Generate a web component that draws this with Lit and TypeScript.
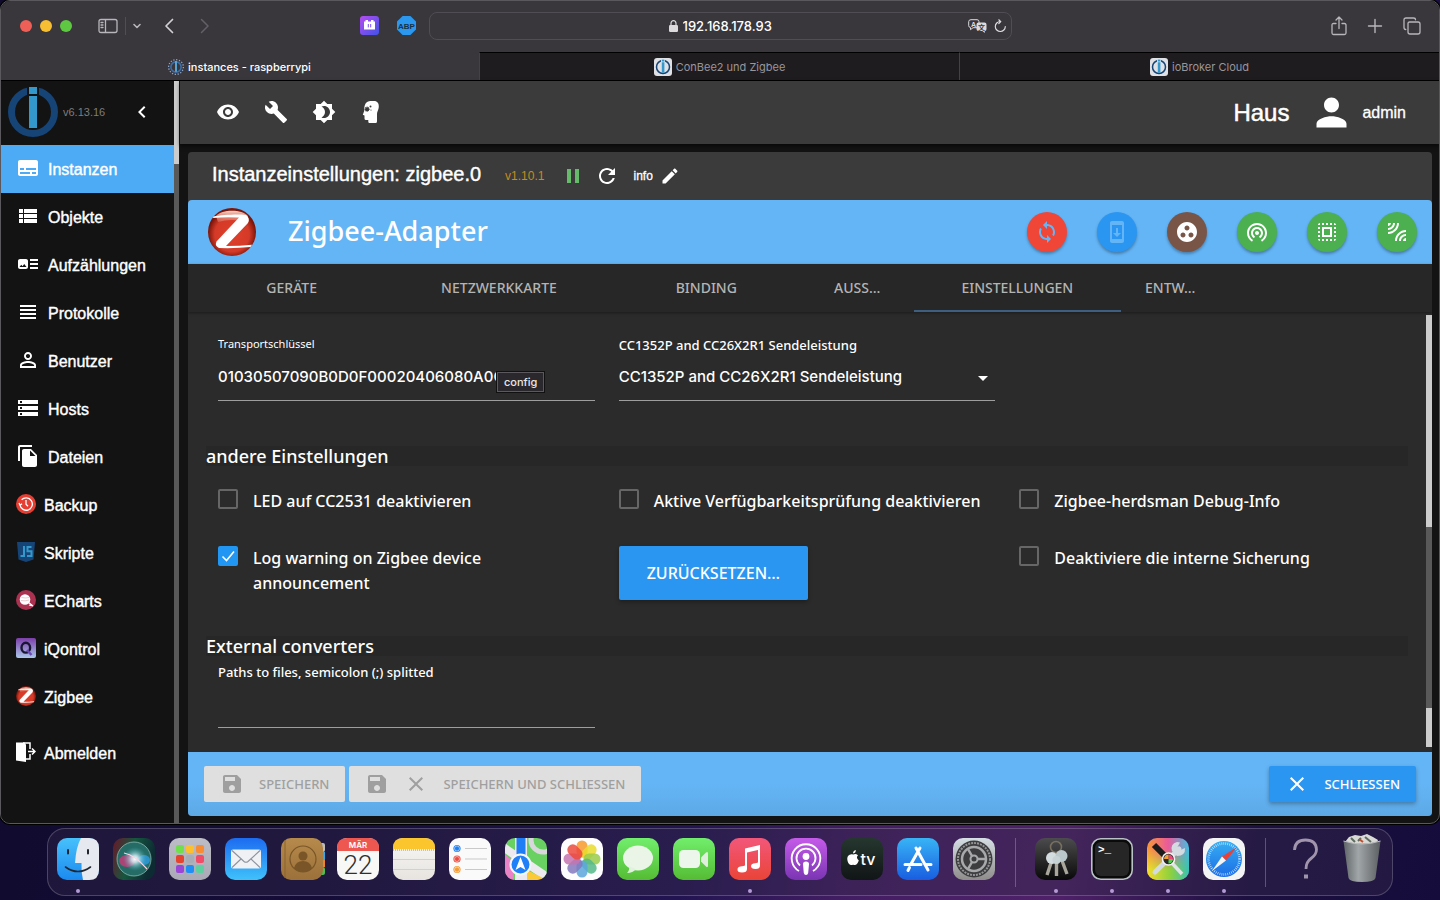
import { LitElement, html, css, svg, TemplateResult } from "lit";
import { customElement } from "lit/decorators.js";
import { classMap } from "lit/directives/class-map.js";

const PATHS: Record<string, string> = {
  eye: "M12 4.5C7 4.5 2.73 7.61 1 12c1.73 4.39 6 7.5 11 7.5s9.27-3.11 11-7.5c-1.73-4.39-6-7.5-11-7.5zM12 17c-2.76 0-5-2.24-5-5s2.24-5 5-5 5 2.24 5 5-2.24 5-5 5zm0-8c-1.66 0-3 1.34-3 3s1.34 3 3 3 3-1.34 3-3-1.34-3-3-3z",
  build: "M22.7 19l-9.1-9.1c.9-2.3.4-5-1.5-6.9-2-2-5-2.4-7.4-1.3L9 6 6 9 1.6 4.7C.4 7.1.9 10.1 2.9 12.1c1.9 1.9 4.6 2.4 6.9 1.5l9.1 9.1c.4.4 1 .4 1.4 0l2.3-2.3c.5-.4.5-1.1.1-1.4z",
  theme: "M20 8.69V4h-4.69L12 .69 8.69 4H4v4.69L.69 12 4 15.31V20h4.69L12 23.31 15.31 20H20v-4.69L23.31 12 20 8.69zM12 18c-.89 0-1.74-.2-2.5-.55C11.56 16.5 13 14.42 13 12s-1.44-4.5-3.5-5.45C10.26 6.2 11.11 6 12 6c3.31 0 6 2.69 6 6s-2.69 6-6 6z",
  subtitles: "M20 4H4c-1.1 0-2 .9-2 2v12c0 1.1.9 2 2 2h16c1.1 0 2-.9 2-2V6c0-1.1-.9-2-2-2zM4 12h4v2H4v-2zm10 6H4v-2h10v2zm6 0h-4v-2h4v2zm0-4H10v-2h10v2z",
  list: "M3 14h4v-4H3v4zm0 5h4v-4H3v4zM3 9h4V5H3v4zm5 5h13v-4H8v4zm0 5h13v-4H8v4zM8 5v4h13V5H8z",
  art: "M22 13h-8v-2h8v2zm0-6h-8v2h8V7zm-8 10h8v-2h-8v2zm-2-8v6c0 1.1-.9 2-2 2H4c-1.1 0-2-.9-2-2V9c0-1.1.9-2 2-2h6c1.1 0 2 .9 2 2zm-1.5 6l-2.25-3-1.75 2.26-1.25-1.51L3.5 15h7z",
  headline: "M4 15h16v-2H4v2zm0 4h16v-2H4v2zm0-8h16V9H4v2zm0-6v2h16V5H4z",
  personOutline: "M12 5.9c1.16 0 2.1.94 2.1 2.1s-.94 2.1-2.1 2.1S9.9 9.16 9.9 8s.94-2.1 2.1-2.1m0 9c2.97 0 6.1 1.46 6.1 2.1v1.1H5.9V17c0-.64 3.13-2.1 6.1-2.1M12 4C9.79 4 8 5.79 8 8s1.79 4 4 4 4-1.79 4-4-1.79-4-4-4zm0 9c-2.67 0-8 1.34-8 4v3h16v-3c0-2.66-5.33-4-8-4z",
  storage: "M2 20h20v-4H2v4zm2-3h2v2H4v-2zM2 4v4h20V4H2zm4 3H4V5h2v2zm-4 7h20v-4H2v4zm2-3h2v2H4v-2z",
  files: "M16 1H4c-1.1 0-2 .9-2 2v14h2V3h12V1zm-1 4l6 6v10c0 1.1-.9 2-2 2H7.99C6.89 23 6 22.1 6 21V7c0-1.1.89-2 1.99-2h7zm-1 7h5.5L14 6.5V12z",
  refresh: "M17.65 6.35C16.2 4.9 14.21 4 12 4c-4.42 0-7.99 3.58-7.99 8s3.57 8 7.99 8c3.73 0 6.84-2.55 7.73-6h-2.08c-.82 2.33-3.04 4-5.65 4-3.31 0-6-2.69-6-6s2.69-6 6-6c1.66 0 3.14.69 4.22 1.78L13 11h7V4l-2.35 2.35z",
  edit: "M3 17.25V21h3.75L17.81 9.94l-3.75-3.75L3 17.25zM20.71 7.04c.39-.39.39-1.02 0-1.41l-2.34-2.34c-.39-.39-1.02-.39-1.41 0l-1.83 1.83 3.75 3.75 1.83-1.83z",
  pause: "M6 19h4V5H6v14zm8-14v14h4V5h-4z",
  sync: "M12 4V1L8 5l4 4V6c3.31 0 6 2.69 6 6 0 1.01-.25 1.97-.7 2.8l1.46 1.46C19.54 15.03 20 13.57 20 12c0-4.42-3.58-8-8-8zm0 14c-3.31 0-6-2.69-6-6 0-1.01.25-1.97.7-2.8L5.24 7.74C4.46 8.97 4 10.43 4 12c0 4.42 3.58 8 8 8v3l4-4-4-4v3z",
  update: "M17 1.01L7 1c-1.1 0-2 .9-2 2v18c0 1.1.9 2 2 2h10c1.1 0 2-.9 2-2V3c0-1.1-.9-1.99-2-1.99zM17 19H7V5h10v14zm-1-6h-3V8h-2v5H8l4 4 4-4z",
  group: "M12 2C6.48 2 2 6.48 2 12s4.48 10 10 10 10-4.48 10-10S17.52 2 12 2zM8 17.5c-1.38 0-2.5-1.12-2.5-2.5s1.12-2.5 2.5-2.5 2.5 1.12 2.5 2.5-1.12 2.5-2.5 2.5zM9.5 8c0-1.38 1.12-2.5 2.5-2.5s2.5 1.12 2.5 2.5-1.12 2.5-2.5 2.5S9.5 9.38 9.5 8zm6.5 9.5c-1.38 0-2.5-1.12-2.5-2.5s1.12-2.5 2.5-2.5 2.5 1.12 2.5 2.5-1.12 2.5-2.5 2.5z",
  tether: "M12 11c-1.1 0-2 .9-2 2s.9 2 2 2 2-.9 2-2-.9-2-2-2zm6 2c0-3.31-2.69-6-6-6s-6 2.69-6 6c0 2.22 1.21 4.15 3 5.19l1-1.74c-1.19-.7-2-1.97-2-3.45 0-2.21 1.79-4 4-4s4 1.79 4 4c0 1.48-.81 2.75-2 3.45l1 1.74c1.79-1.04 3-2.97 3-5.19zM12 3C6.48 3 2 7.48 2 13c0 3.7 2.01 6.92 4.99 8.65l1-1.73C5.61 18.53 4 15.96 4 13c0-4.42 3.58-8 8-8s8 3.58 8 8c0 2.96-1.61 5.53-4 6.92l1 1.73c2.99-1.73 5-4.95 5-8.65 0-5.52-4.48-10-10-10z",
  selectAll: "M3 5h2V3c-1.1 0-2 .9-2 2zm0 8h2v-2H3v2zm4 8h2v-2H7v2zM3 9h2V7H3v2zm10-6h-2v2h2V3zm6 0v2h2c0-1.1-.9-2-2-2zM5 21v-2H3c0 1.1.9 2 2 2zm-2-4h2v-2H3v2zM9 3H7v2h2V3zm2 18h2v-2h-2v2zm8-8h2v-2h-2v2zm0 8c1.1 0 2-.9 2-2h-2v2zm0-12h2V7h-2v2zm0 8h2v-2h-2v2zm-4 4h2v-2h-2v2zm0-16h2V3h-2v2zM7 17h10V7H7v10zm2-8h6v6H9V9z",
  leak: "M6 3H3v3c1.66 0 3-1.34 3-3zm8 0h-2c0 4.97-4.03 9-9 9v2c6.08 0 11-4.93 11-11zm-4 0H8c0 2.76-2.24 5-5 5v2c3.87 0 7-3.13 7-7zm0 18h2c0-4.97 4.03-9 9-9v-2c-6.07 0-11 4.93-11 11zm8 0h3v-3c-1.66 0-3 1.34-3 3zm-4 0h2c0-2.76 2.24-5 5-5v-2c-3.87 0-7 3.13-7 7z",
  save: "M17 3H5c-1.11 0-2 .9-2 2v14c0 1.1.89 2 2 2h14c1.1 0 2-.9 2-2V7l-4-4zm-5 16c-1.66 0-3-1.34-3-3s1.34-3 3-3 3 1.34 3 3-1.34 3-3 3zm3-10H5V5h10v4z",
  close: "M19 6.41L17.59 5 12 10.59 6.41 5 5 6.41 10.59 12 5 17.59 6.41 19 12 13.41 17.59 19 19 17.59 13.41 12z",
  person: "M12 12c2.21 0 4-1.79 4-4s-1.79-4-4-4-4 1.79-4 4 1.79 4 4 4zm0 2c-2.67 0-8 1.34-8 4v2h16v-2c0-2.66-5.33-4-8-4z",
  chevron: "M15.41 7.41L14 6l-6 6 6 6 1.41-1.41L10.83 12z",
  drop: "M7 10l5 5 5-5z",
};

const icon = (name: string, size = 24) =>
  html`<svg width=${size} height=${size} viewBox="0 0 24 24" fill="currentColor" aria-hidden="true"><path d=${PATHS[name]}></path></svg>`;

const stroked = (w: number, h: number, d: string, width = 1.4) =>
  html`<svg width=${w} height=${h} viewBox="0 0 ${w} ${h}" fill="none" stroke="currentColor" stroke-width=${width} stroke-linecap="round" stroke-linejoin="round" aria-hidden="true"><path d=${d}></path></svg>`;

const head = html`<svg width="24" height="24" viewBox="1.500 0 24 24" aria-hidden="true">
  <path fill="#fff" d="M12 1h3.500C19 1 20.500 3.500 20.300 7c-.2 3-1.800 4.500-1.800 7v7.500q0 1.500-1.500 1.500h-6q-1.200 0-1.200-1.300V20H7.500Q6 20 6 18.500V15.500L4.300 14.700l1.500-4C5.500 4.500 7.500 1 12 1z"/>
  <circle cx="8.600" cy="9.200" r="2" fill="#3b3b3b"/><circle cx="12" cy="6.500" r="1" fill="#3b3b3b"/><circle cx="12.500" cy="10" r=".6" fill="#3b3b3b"/>
  <path d="M8.600 6.500v5.400M5.900 9.200h5.400M6.700 7.300l3.800 3.800M10.500 7.300l-3.800 3.800" stroke="#3b3b3b" stroke-width=".9"/>
</svg>`;

const brokerLogo = (size: number, ticks = false) => html`<svg width=${size} height=${size} viewBox="0 0 50 50" aria-hidden="true">
  ${ticks ? svg`<circle cx="25" cy="25" r="23" fill="none" stroke="#8fa6c4" stroke-width="4" stroke-dasharray="4 5"/>` : ""}
  <circle cx="25" cy="25" r=${ticks ? 16 : 21.5} fill="none" stroke=${ticks ? "#3c6ea8" : "#164477"} stroke-width=${ticks ? 5 : 7}/>
  ${ticks ? svg`<path fill="#5aa9d8" d="M22 6h6v34h-6z"/>` : svg`<path fill="#131313" d="M19 0h12v10H19z"/><path fill="#3399cc" d="M21 0h8v7h-8zM21 9h8v32h-8z"/>`}
</svg>`;

const brokerBadge = html`<svg width="18" height="18" viewBox="0 0 18 18" aria-hidden="true">
  <rect width="18" height="18" rx="3" fill="#dfe1e4"/>
  <circle cx="9" cy="9" r="6.500" fill="none" stroke="#164477" stroke-width="1.500"/>
  <path fill="#dfe1e4" d="M7 1.500h4v3H7z"/><path fill="#3399cc" d="M7.800 1.800h2.600v1.700H7.800zM7.800 4.200h2.600v10.500H7.800z"/>
</svg>`;

const zigbeeLogo = (size: number, id: string) => html`<svg width=${size} height=${size} viewBox="0 0 48 48" aria-hidden="true">
  <defs>
    <radialGradient id="${id}r" cx=".5" cy=".55" r=".5"><stop offset="0" stop-color="#e0402b"/><stop offset=".72" stop-color="#d43a28"/><stop offset="1" stop-color="#7c1509"/></radialGradient>
    <linearGradient id="${id}g" x1="0" y1="0" x2="0" y2="1"><stop offset="0" stop-color="#f9d2c6"/><stop offset="1" stop-color="#e4806c" stop-opacity=".5"/></linearGradient>
  </defs>
  <circle cx="24" cy="24" r="24" fill="url(#${id}r)"/>
  <path fill="url(#${id}g)" d="M8 8C14 1 34 1 40 8L38 14Q24 10 10 14z"/>
  <path fill="#fff" d="M5.500 8.500C14 6.800 30 6 38 7Q42.500 10.500 40 15L18 38Q32 38 44 36.700L42.500 39Q28 40.500 11 40Q6.500 38 8.500 33.500L31 9.500Q17 8.600 5 10z"/>
</svg>`;

const backupIcon = html`<svg width="20" height="20" viewBox="0 0 20 20" aria-hidden="true"><circle cx="10" cy="10" r="10" fill="#e53e33"/><path d="M4 11a6.200 6.200 0 1 0 1.600-5.200M3 9l1 2.300 2-1.500M10 6v4.200l2 2" fill="none" stroke="#fff" stroke-width="1.300"/></svg>`;
const scriptIcon = html`<svg width="20" height="20" viewBox="0 0 20 20" aria-hidden="true"><path fill="#164477" d="M1 0h18l-1.500 17.500L10 20l-7.500-2.500z"/><path d="M8 4v10H4.500M15.500 5H11.500v4.300h4V14h-4.500" fill="none" stroke="#3399cc" stroke-width="2"/></svg>`;
const chartIcon = html`<svg width="20" height="20" viewBox="0 0 20 20" aria-hidden="true"><circle cx="10" cy="10" r="10" fill="#aa3150"/><circle cx="9" cy="9.500" r="5.300" fill="#fff"/><path d="M12 12l5 4-4-1M5 7c3-1 5 0 8 1M4.500 10c3 1 6 1 9 0" stroke="#fff" fill="none" stroke-width="1.200"/><path d="M5.500 7.500q4 1 8 0M5 10.500q4 1 8-.5" stroke="#dba6b4" fill="none" stroke-width=".6"/></svg>`;
const qIcon = html`<svg width="20" height="20" viewBox="0 0 20 20" aria-hidden="true"><defs><linearGradient id="qg" x1="0" y1="0" x2="0" y2="1"><stop offset="0" stop-color="#7b3fa8"/><stop offset="1" stop-color="#abc6ea"/></linearGradient></defs><rect width="20" height="20" rx="2" fill="url(#qg)"/><ellipse cx="9.800" cy="9.700" rx="4.300" ry="4.900" fill="none" stroke="#181632" stroke-width="2.400"/><path d="M11 12l4.500 5" stroke="#6d49b4" stroke-width="2.400"/></svg>`;
const exitIcon = html`<svg width="20" height="20" viewBox="0 0 20 20" aria-hidden="true"><path fill="#fff" d="M0 .5h8.500l1.500 2V20L0 18.500z"/><path d="M7 1h7v6M14 12v5h-4M12 9.500h7M16 6.500l3 3-3 3" fill="none" stroke="#fff" stroke-width="1.500"/></svg>`;

type NavItem = { label: string; icon: TemplateResult; active?: boolean; apart?: boolean };

const NAV: NavItem[] = [
  { label: "Instanzen", icon: icon("subtitles"), active: true },
  { label: "Objekte", icon: icon("list") },
  { label: "Aufzählungen", icon: icon("art") },
  { label: "Protokolle", icon: icon("headline") },
  { label: "Benutzer", icon: icon("personOutline") },
  { label: "Hosts", icon: icon("storage") },
  { label: "Dateien", icon: icon("files") },
  { label: "Backup", icon: backupIcon },
  { label: "Skripte", icon: scriptIcon },
  { label: "ECharts", icon: chartIcon },
  { label: "iQontrol", icon: qIcon },
  { label: "Zigbee", icon: zigbeeLogo(20, "zn") },
  { label: "Abmelden", icon: exitIcon, apart: true },
];

@customElement("safari-toolbar")
export class SafariToolbar extends LitElement {
  static styles = css`
    :host { display: block; font-family: Inter, "Liberation Sans", sans-serif; color: #b8b6ba; }
    * { box-sizing: border-box; }
    svg { display: block; }
    button { all: unset; display: flex; }
    .bar { display: grid; grid-template-columns: 1fr 583px 1fr; align-items: center; height: 51px; padding-bottom: 2px; background: #39363c; }
    .left { display: flex; align-items: center; padding: 0 13px 0 19px; }
    .lights { display: flex; gap: 8px; margin-right: 26px; }
    .light { width: 12px; height: 12px; border-radius: 50%; background: #ed5f57; }
    .light.yellow { background: #f6be32; }
    .light.green { background: #5fc842; }
    .rule { width: 1px; height: 18px; margin: 0 7px; background: #504d54; }
    .back { margin-left: 23px; color: #d2d0d4; }
    .forward { margin-left: 26px; color: #636067; }
    .extensions { display: flex; gap: 18px; margin-left: auto; }
    .abp { font: 700 8px "Liberation Sans", sans-serif; fill: #17324b; }
    .address { display: flex; align-items: center; height: 28px; padding: 0 4px 0 46px; border: 1px solid #504d54; border-radius: 8px; color: #dcdadd; }
    .where { display: flex; align-items: center; justify-content: center; gap: 5px; flex: 1; }
    .where input { all: unset; width: 92px; font-size: 13px; font-weight: 500; line-height: 18px; color: #fff; }
    .glyph { font: 700 7px "Liberation Sans", "Noto Sans CJK SC", sans-serif; }
    .tools { display: flex; gap: 7px; align-items: center; }
    .right { display: flex; align-items: center; justify-content: flex-end; gap: 20px; padding-right: 18px; }
    .tabs { display: grid; grid-template-columns: repeat(3, 1fr); height: 29px; margin-left: -2px; border-bottom: 1px solid #000; background: #1f1c20; }
    .tab { display: flex; align-items: center; justify-content: center; gap: 4px; border-top: 1px solid #000; border-left: 1px solid #444147; font-size: 11px; line-height: 16px; color: #98969a; text-decoration: none; }
    .tab.active { border-color: #39363c; background: #39363c; color: #fff; font-weight: 500; }
  `;

  render() {
    return html`
      <div class="bar">
        <div class="left">
          <div class="lights"><span class="light"></span><span class="light yellow"></span><span class="light green"></span></div>
          <button aria-label="Seitenleiste">${stroked(20, 16, "M3 1.500h14q2 0 2 2v9q0 2-2 2H3q-2 0-2-2v-9q0-2 2-2zM7.500 2v12M3 4.500h2M3 7h2M3 9.500h2", 1.3)}</button>
          <span class="rule"></span>
          <button aria-label="Tabgruppen">${stroked(8, 6, "M1 1.500l3 3 3-3", 1.6)}</button>
          <button class="back" aria-label="Zurück">${stroked(10, 16, "M8.500 1.500L2 8l6.500 6.500", 1.7)}</button>
          <button class="forward" aria-label="Vorwärts">${stroked(10, 16, "M1.500 1.500L8 8l-6.500 6.500", 1.5)}</button>
          <div class="extensions">
            <svg width="19" height="19" viewBox="0 0 19 19"><defs><linearGradient id="ext" x1="0" y1="0" x2="1" y2="1"><stop offset="0" stop-color="#b64df0"/><stop offset="1" stop-color="#3f52e8"/></linearGradient></defs><rect width="19" height="19" rx="3" fill="url(#ext)"/><path fill="#fff" d="M5.500 4h2.500v1.500h3V4h2.500v1.500h1.500v8H4v-8h1.500z"/><path d="M8.300 8v3.400M10.700 8v3.400" stroke="#7a50ea"/></svg>
            <svg width="19" height="19" viewBox="0 0 19 19"><path fill="#2b97ef" d="M5.600 0h7.800L19 5.600v7.800L13.400 19H5.600L0 13.400V5.600z"/><text class="abp" x="9.500" y="12.500" text-anchor="middle">ABP</text></svg>
          </div>
        </div>
        <div class="address">
          <label class="where">
            <svg width="9" height="12" viewBox="0 0 9 12" aria-hidden="true"><rect y="5" width="9" height="7" rx="1.200" fill="#dcdadd"/><path d="M2 5.500V3.200a2.500 2.500 0 0 1 5 0v2.300" fill="none" stroke="#dcdadd" stroke-width="1.200"/></svg>
            <input aria-label="Adresse" value="192.168.178.93" />
          </label>
          <div class="tools">
            <svg width="19" height="14" viewBox="0 0 19 14"><path d="M3 .7h6q2 0 2 2v4q0 2-2 2H5l-2.500 2V8.600Q.7 8.300.7 6.700v-4q0-2 2.300-2z" fill="none" stroke="#dcdadd"/><path fill="#dcdadd" d="M10.500 3.500h6q2 0 2 2v4.500q0 2-1.700 2v1.900l-2.500-1.900h-3.800q-2 0-2-2V5.500q0-2 2-2z"/><text class="glyph" x="3" y="7.500" fill="#dcdadd">A</text><text class="glyph" x="10" y="10.500" fill="#39363c">文</text></svg>
            <button aria-label="Neu laden">${stroked(13, 14, "M11.300 7.500a5 5 0 1 1-5-5M4.800 .8l2 1.800-2 2", 1.2)}</button>
          </div>
        </div>
        <div class="right">
          <button aria-label="Teilen">${stroked(16, 20, "M5 7.500H2.500q-1.500 0-1.500 1.500v8q0 1.500 1.500 1.500h11q1.500 0 1.500-1.500V9q0-1.500-1.500-1.500H11M8 12.500V1.200M5 4l3-3 3 3", 1.3)}</button>
          <button aria-label="Neuer Tab">${stroked(16, 16, "M8 1.500v13M1.500 8h13", 1.4)}</button>
          <button aria-label="Tabübersicht">${stroked(18, 18, "M6.500 5H15q2 0 2 2v8q0 2-2 2H7q-2 0-2-2V6.500q0-1.500 1.500-1.500zM2.800 12.500Q1 12.500 1 10.500V3q0-2 2-2h7.500q2 0 2 1.800", 1.3)}</button>
        </div>
      </div>
      <nav class="tabs">
        <a class="tab active" href="#">${brokerLogo(16, true)}instances - raspberrypi</a>
        <a class="tab" href="#">${brokerBadge}ConBee2 und Zigbee</a>
        <a class="tab" href="#">${brokerBadge}ioBroker Cloud</a>
      </nav>
    `;
  }
}

@customElement("side-menu")
export class SideMenu extends LitElement {
  static styles = css`
    :host { display: flex; width: 180px; background: #131313; font-family: "Liberation Sans", Arial, sans-serif; color: #fff; }
    svg { display: block; flex: none; }
    .menu { flex: 1; }
    .head { display: flex; align-items: center; height: 64px; padding: 0 20px 2px 8px; box-sizing: border-box; }
    .version { margin-left: 5px; font-size: 11px; line-height: 16px; color: #7d7d7d; flex: 1; }
    .collapse { all: unset; display: flex; }
    .item { display: flex; align-items: center; gap: 8px; height: 48px; padding: 2px 0 0 16px; box-sizing: border-box; font-size: 16px; line-height: 24px; color: #fff; text-decoration: none; -webkit-text-stroke: .4px #fff; }
    .item svg { margin-bottom: 4px; }
    .item.active { background: #4dabf5; }
    .item.apart { margin-top: 8px; }
    .track { width: 5px; margin-right: 1px; background: linear-gradient(#ccc 83px, #595959 83px); }
  `;

  render() {
    return html`
      <nav class="menu">
        <div class="head">
          ${brokerLogo(50)}
          <span class="version">v6.13.16</span>
          <button class="collapse" aria-label="Menü einklappen">${icon("chevron")}</button>
        </div>
        ${NAV.map((n) => html`<a href="#" class=${classMap({ item: true, active: !!n.active, apart: !!n.apart })}>${n.icon}${n.label}</a>`)}
      </nav>
      <div class="track"></div>
    `;
  }
}

@customElement("adapter-settings")
export class AdapterSettings extends LitElement {
  static styles = css`
    :host { display: flex; flex-direction: column; min-height: 0; font-family: "Noto Sans", "Open Sans", sans-serif; color: #fff; border-radius: 4px; overflow: hidden; background: #3b3b3b; }
    * { box-sizing: border-box; }
    svg { display: block; flex: none; }
    .title { display: flex; align-items: center; height: 48px; padding-left: 24px; font-family: "Liberation Sans", Arial, sans-serif; }
    .title h1 { margin: 0 24px 4px 0; font-size: 20px; line-height: 24px; font-weight: 400; -webkit-text-stroke: .4px #fff; }
    .version { font-size: 12px; color: #c78a1e; margin-right: 17px; }
    .plain { all: unset; display: flex; align-items: center; gap: 7px; font-size: 12px; margin-right: 10px; -webkit-text-stroke: .3px #fff; }
    .plain.run { color: #66bb6a; }
    .plain.info { margin-left: 4px; }
    .banner { display: flex; align-items: center; height: 64px; padding: 0 15px 0 20px; background: #64b5f6; border-radius: 4px 4px 0 0; }
    .banner h2 { margin: 0 auto 2px 32px; font-size: 27px; line-height: 36px; font-weight: 500; }
    .rounds { display: flex; gap: 30px; }
    .round { all: unset; display: grid; place-items: center; width: 40px; height: 40px; border-radius: 50%; background: #4caf50; color: #fff; box-shadow: 0 2px 3px rgba(0, 0, 0, .3); }
    .round.red { background: #f04638; color: #64b5f6; }
    .round.blue { background: #2b96f1; color: #64b5f6; }
    .round.brown { background: #795548; }
    .tabs { display: grid; grid-template-columns: repeat(12, 1fr); height: 48px; flex: none; background: #272727; box-shadow: 0 1px 3px rgba(0, 0, 0, .4); z-index: 1; }
    .tab { grid-column: span 2; display: flex; align-items: center; justify-content: center; border: 0; background: none; padding: 0 24px; font: 500 14px/20px "Noto Sans", sans-serif; color: #b4b4b4; }
    .tab.short { grid-column: span 1; justify-content: flex-start; }
    .tab.active { border-bottom: 2px solid #3f5f80; padding-top: 2px; }
    .body { display: flex; flex: 1; min-height: 0; background: #2b2b2b; }
    .form { flex: 1; padding: 22px 18px 0; }
    .track { width: 6px; margin: 3px 0 5px; background: linear-gradient(#ccc 49%, #595959 49%, #595959 91%, #ccc 91%); }
    .row { display: grid; grid-template-columns: repeat(3, 1fr); row-gap: 32px; }
    .col { padding: 0 12px; position: relative; min-width: 0; }
    .label { display: block; padding-top: 2px; font-size: 13px; line-height: 18px; font-weight: 500; }
    .label.small { padding-top: 0; font-size: 11px; line-height: 20px; font-weight: 400; }
    .field { display: block; width: 100%; height: 47px; border: 0; border-bottom: 1px solid #9e9e9e; border-radius: 0; padding: 0; outline: 0; background: none; font: 500 15px/20px Inter, "Liberation Sans", sans-serif; color: #fff; appearance: none; }
    input.field { padding-bottom: 2px; }
    .pick { display: grid; align-items: center; }
    .pick > * { grid-area: 1 / 1; }
    .pick svg { justify-self: end; pointer-events: none; }
    .tip { position: absolute; left: 291px; top: 38px; padding: 0 6px; border: 1px solid #5c595e; background: #2b282d; box-shadow: 0 0 0 1px #111; font: 500 11px/18px Inter, sans-serif; color: #e8e8e8; }
    .section { margin: 45px 0 0; font-size: 18px; line-height: 20px; font-weight: 500; background: #272727; }
    .section.next { margin: 36px 0 5px; }
    .checks { margin-top: 23px; }
    .check { display: flex; gap: 15px; font-size: 16px; line-height: 25px; font-weight: 500; }
    .check input { appearance: none; flex: none; width: 20px; height: 20px; margin: 0; border: 2px solid #666; border-radius: 2px; }
    .check input:checked { border-color: #2196f3; background: #2196f3 url("data:image/svg+xml,%3Csvg xmlns='http://www.w3.org/2000/svg' viewBox='0 0 16 16'%3E%3Cpath d='M2.500 8.500l4 4L14 3.500' fill='none' stroke='white' stroke-width='1.600'/%3E%3C/svg%3E") center / 100% no-repeat; }
    .btn { display: inline-flex; align-items: center; gap: 15px; height: 36px; padding: 0 16px; border: 0; border-radius: 2px; background: #2b96f1; box-shadow: 0 2px 4px rgba(0, 0, 0, .3); font: 500 13px/20px "Noto Sans", sans-serif; color: #fff; }
    .btn.large { height: 54px; padding: 0 28px; font-size: 16px; }
    .btn:disabled { background: #dfdfdf; color: #9f9f9f; box-shadow: none; }
    .footer { display: flex; align-items: center; gap: 4px; height: 64px; flex: none; padding: 0 16px; background: linear-gradient(#64b5f6 50%, #5da9e6); }
    .footer .end { margin-left: auto; }
  `;

  private check(label: string, checked = false) {
    return html`<div class="col"><label class="check"><input type="checkbox" .checked=${checked} /><span>${label}</span></label></div>`;
  }

  render() {
    return html`
      <header class="title">
        <h1>Instanzeinstellungen: zigbee.0</h1>
        <span class="version">v1.10.1</span>
        <button class="plain run" aria-label="Anhalten">${icon("pause")}</button>
        <button class="plain" aria-label="Neu starten">${icon("refresh")}</button>
        <button class="plain info">info ${icon("edit", 20)}</button>
      </header>
      <div class="banner">
        ${zigbeeLogo(48, "zb")}
        <h2>Zigbee-Adapter</h2>
        <div class="rounds">
          <button class="round red" aria-label="Neu verbinden">${icon("sync")}</button>
          <button class="round blue" aria-label="Aktualisieren">${icon("update")}</button>
          <button class="round brown" aria-label="Gruppen">${icon("group")}</button>
          <button class="round" aria-label="Touchlink">${icon("tether")}</button>
          <button class="round" aria-label="Code">${icon("selectAll")}</button>
          <button class="round" aria-label="Anlernen">${icon("leak")}</button>
        </div>
      </div>
      <div class="tabs">
        <button class="tab">GERÄTE</button>
        <button class="tab">NETZWERKKARTE</button>
        <button class="tab">BINDING</button>
        <button class="tab short">AUSS…</button>
        <button class="tab active">EINSTELLUNGEN</button>
        <button class="tab short">ENTW…</button>
      </div>
      <div class="body">
        <div class="form">
          <div class="row">
            <div class="col">
              <label class="label small" for="key">Transportschlüssel</label>
              <input class="field" id="key" value="01030507090B0D0F00020406080A0C0D" />
              <span class="tip" role="tooltip">config</span>
            </div>
            <div class="col">
              <label class="label" for="power">CC1352P and CC26X2R1 Sendeleistung</label>
              <div class="pick">
                <select class="field" id="power"><option>CC1352P and CC26X2R1 Sendeleistung</option></select>
                ${icon("drop")}
              </div>
            </div>
          </div>
          <h3 class="section">andere Einstellungen</h3>
          <div class="row checks">
            ${this.check("LED auf CC2531 deaktivieren")}
            ${this.check("Aktive Verfügbarkeitsprüfung deaktivieren")}
            ${this.check("Zigbee-herdsman Debug-Info")}
            ${this.check("Log warning on Zigbee device announcement", true)}
            <div class="col"><button class="btn large">ZURÜCKSETZEN…</button></div>
            ${this.check("Deaktiviere die interne Sicherung")}
          </div>
          <h3 class="section next">External converters</h3>
          <div class="row">
            <div class="col">
              <label class="label" for="paths">Paths to files, semicolon (;) splitted</label>
              <input class="field" id="paths" />
            </div>
          </div>
        </div>
        <div class="track"></div>
      </div>
      <footer class="footer">
        <button class="btn" disabled>${icon("save")}SPEICHERN</button>
        <button class="btn" disabled>${icon("save")}${icon("close")}SPEICHERN UND SCHLIESSEN</button>
        <button class="btn end">${icon("close")}SCHLIESSEN</button>
      </footer>
    `;
  }
}

const grad = (id: string, a: string, b: string) =>
  svg`<defs><linearGradient id=${id} x1="0" y1="0" x2="0" y2="1"><stop offset="0" stop-color=${a}/><stop offset="1" stop-color=${b}/></linearGradient></defs><rect width="42" height="42" rx="10" fill="url(#${id})"/>`;

const PETALS = ["#f79a2b", "#e9da2c", "#9acb4a", "#56b88a", "#5aa6dd", "#8478bd", "#c474b0", "#ec4a3d"];
const TILES = ["#6fe04c", "#fcc02e", "#f98c33", "#e6432f", "#a8adb5", "#f24b68", "#9b45d6", "#1f8ef5", "#5fcf9f"];

type DockItem = { name: string; art: unknown; open?: boolean; after?: boolean };

const DOCK: DockItem[] = [
  { name: "Finder", open: true, art: svg`${grad("d1", "#47c1fb", "#1b8af0")}<path fill="#e6e9ef" d="M24 0h8q10 0 10 10v22q0 10-10 10h-6q-2-8-1.500-17H18q1-16 6-25z"/><path d="M11 12v3.500M31 12v3.500" stroke="#20252e" stroke-width="2" stroke-linecap="round"/><path d="M8.500 29q12.500 9 25 0" fill="none" stroke="#20252e" stroke-width="1.600" stroke-linecap="round"/>` },
  { name: "Siri", art: svg`<defs><linearGradient id="d2" x1="0" y1="0" x2="1" y2=".3"><stop offset="0" stop-color="#6a1628"/><stop offset=".5" stop-color="#15573f"/><stop offset="1" stop-color="#0d2b33"/></linearGradient><radialGradient id="d2b"><stop offset="0" stop-color="#fff"/><stop offset=".3" stop-color="#d5f3fa" stop-opacity=".8"/><stop offset="1" stop-color="#3ca7b5" stop-opacity="0"/></radialGradient></defs><rect width="42" height="42" rx="10" fill="url(#d2)"/><circle cx="21" cy="21" r="17" fill="#256c67" stroke="#9bc4bd" stroke-opacity=".7"/><ellipse cx="14" cy="23" rx="8" ry="6" fill="#d8367a" opacity=".75"/><ellipse cx="31" cy="22" rx="6" ry="5" fill="#2d9de4" opacity=".8"/><circle cx="22" cy="21" r="12" fill="url(#d2b)"/><path d="M11 15q11 2 23 16" fill="none" stroke="#ffd3e2" stroke-width="1.200"/>` },
  { name: "Launchpad", art: svg`${grad("d3", "#bcbdc6", "#aaa9b6")}${TILES.map((c, i) => svg`<rect x=${7 + (i % 3) * 10} y=${7 + Math.floor(i / 3) * 10} width="8" height="8" rx="2" fill=${c}/>`)}` },
  { name: "Mail", art: svg`${grad("d4", "#1c6bf0", "#3fc2fb")}<rect x="6" y="11.500" width="30" height="19" rx="2" fill="#eff1f4"/><path d="M7 12.500l12 11q2 1.500 4 0l12-11M7 29.500l9.500-9M35 29.500l-9.500-9" fill="none" stroke="#8d939d" stroke-width="1.100"/>` },
  { name: "Kontakte", art: svg`<rect x="35" y="5" width="9" height="9" rx="2" fill="#bdbdbd"/><rect x="35" y="14" width="9" height="8" fill="#3ba6e8"/><rect x="35" y="22" width="9" height="7" fill="#ee8331"/><rect x="35" y="29" width="9" height="8" rx="2" fill="#4cc152"/>${grad("d5", "#b68a4b", "#9c713a")}<path d="M4 2v38" stroke="#8b622e"/><circle cx="22" cy="21" r="13" fill="none" stroke="#795527" stroke-width="1.200"/><circle cx="22" cy="18" r="4.500" fill="#795527"/><path fill="#795527" d="M13 30q2-7 9-7t9 7q-4 4-9 4t-9-4z"/>` },
  { name: "Kalender", art: svg`<rect width="42" height="42" rx="10" fill="#f8f8f7"/><path fill="#ee5650" d="M10 0h22q10 0 10 10v3H0v-3Q0 0 10 0z"/><text x="21" y="10" text-anchor="middle" font-family="Inter, sans-serif" font-size="8" font-weight="600" fill="#fff">MÄR</text><text x="21" y="36" text-anchor="middle" font-family="Roboto, sans-serif" font-weight="300" font-size="26" fill="#303030">22</text>` },
  { name: "Notizen", art: svg`${grad("d7", "#f8f7f5", "#e7e4df")}<path fill="#fbc52e" d="M10 0h22q10 0 10 10v1H0v-1Q0 0 10 0z"/><path d="M0 12h42" stroke="#a09271" stroke-dasharray="1 1"/><path d="M0 21.500h42M0 31.500h42" stroke="#d3d1cc"/>` },
  { name: "Erinnerungen", art: svg`<rect width="42" height="42" rx="10" fill="#fafafa"/>${["#1e7ff2", "#ea4a3f", "#f39a32"].map((c, i) => svg`<circle cx="8" cy=${10.5 + i * 10.5} r="3.600" fill=${c}/><circle cx="8" cy=${10.5 + i * 10.5} r="2.500" fill="none" stroke="#fff" stroke-width=".5"/><path d="M16 ${10.5 + i * 10.5}h22" stroke="#c9c9c9"/>`)}` },
  { name: "Karten", art: svg`<defs><clipPath id="mc"><rect width="42" height="42" rx="10"/></clipPath></defs><g clip-path="url(#mc)"><rect width="42" height="42" fill="#69d162"/><path fill="#eceaef" d="M-2 4L42 34v10L-2 14zM10-1h12v44H10z"/><path fill="#ea83c6" d="M0 17l9 6v20H0z"/><path fill="#fcca36" d="M22 32l20 10v3H22z"/><path fill="#1e7cf5" d="M11.500 0h9v18h-9z"/><circle cx="38" cy="2" r="12" fill="none" stroke="#d7d7dc" stroke-width="5"/></g><circle cx="15.500" cy="26.500" r="10" fill="#2080f7" stroke="#f5f6fa" stroke-width="2"/><path fill="#fff" d="M15.500 19l5 13-5-3-5 3z"/>` },
  { name: "Fotos", art: svg`<rect width="42" height="42" rx="10" fill="#fdfdfd"/>${PETALS.map((c, i) => svg`<rect x="15.500" y="2.500" width="11" height="17" rx="5.500" fill=${c} opacity=".85" transform="rotate(${i * 45} 21 21)"/>`)}` },
  { name: "Nachrichten", art: svg`${grad("d11", "#71ee6c", "#55bc34")}<ellipse cx="21" cy="20" rx="15" ry="12.500" fill="#eaf5e8"/><path fill="#e2f1df" d="M12 28q1 4-2 7 6 0 9-4z"/>` },
  { name: "FaceTime", art: svg`${grad("d12", "#71ee6c", "#55bc34")}<rect x="6" y="12" width="21" height="18" rx="4.500" fill="#edf6eb"/><path fill="#dfeedd" d="M28 19.500l5-5q2-1.500 2 1v12q0 2.500-2 1l-5-5z"/>` },
  { name: "Musik", open: true, art: svg`${grad("d13", "#f2577a", "#ea4437")}<path fill="#fff" d="M16 10.500l15-3.500v4.500L18 14.500V31q0 3.500-5 3.500t-4.500-3.500q.5-2.800 4.500-2.800 1.500 0 3-.7zM29 10h2v17.500q0 3.500-4.500 3.500T22 28q.5-2.800 4-2.800 1.500 0 3-.7z"/>` },
  { name: "Podcasts", art: svg`${grad("d14", "#c55be9", "#7a35b3")}<g fill="none" stroke="#fff" stroke-width="1.800"><path d="M14 33A14.300 14.300 0 1 1 28 33"/><path d="M15 27.500A9.500 9.500 0 1 1 27 27.500"/></g><circle cx="21" cy="18.500" r="3.400" fill="#fff"/><path fill="#fff" d="M18 26q0-2.500 3-2.500t3 2.500l-.8 9q-.4 2-2.200 2t-2.200-2z"/>` },
  { name: "TV", art: svg`${grad("d15", "#26372f", "#111516")}<path fill="#fff" d="M12.500 16.500q2-1.500 4.500.8-2.500 2.500.8 5.200-1.800 5-4.500 4.500-1.200-.6-2.500 0C7.500 28 5 21 7 18q2-2.500 5.500-1.500zM12 15.500q0-3 2.800-3.500.2 3-2.800 3.500z"/><text x="19.500" y="27" font-family="Inter, sans-serif" font-weight="500" font-size="16" fill="#fff">tv</text>` },
  { name: "App Store", art: svg`${grad("d16", "#38b4f6", "#195de1")}<g stroke="#fff" stroke-width="3" stroke-linecap="round"><path d="M23 10L14 26M12.500 29.500l-1.500 3M19 10l12 22M8 26.500h16M29 26.500h5"/></g>` },
  { name: "Einstellungen", after: true, art: svg`${grad("d17", "#d6dfe5", "#8f8c8b")}<circle cx="21" cy="21" r="18.500" fill="#3d3d3f"/><circle cx="21" cy="21" r="16" fill="none" stroke="#929394" stroke-width="2" stroke-dasharray="2 1"/><circle cx="21" cy="21" r="12" fill="none" stroke="#a8a9aa" stroke-width="2.500"/><circle cx="21" cy="21" r="3.500" fill="none" stroke="#a8a9aa" stroke-width="2"/><path d="M24 21h8M19 18l-4-7M19 24l-4 7" stroke="#a8a9aa" stroke-width="2.500"/>` },
  { name: "Schlüsselbund", open: true, art: svg`${grad("d18", "#4c4c4e", "#090909")}<circle cx="21" cy="9" r="5.500" fill="none" stroke="#77705f" stroke-width="1.600"/><path d="M17 22l-5 15M21.500 22v16M26 20l6 16" stroke="#a9a69c" stroke-width="3.400"/><circle cx="17" cy="20" r="6" fill="#d3dcdf"/><circle cx="26.500" cy="18" r="6" fill="#bac8cb"/><circle cx="21.500" cy="22" r="4" fill="#c7d2d5"/>` },
  { name: "Terminal", open: true, art: svg`<rect x=".8" y=".8" width="40.400" height="40.400" rx="9" fill="#0a0a0a" stroke="#b9c2c4" stroke-width="1.600"/><rect x="4" y="4" width="34" height="34" rx="6" fill="#262626"/><text x="7" y="15" font-family="Liberation Mono, monospace" font-weight="700" font-size="11" fill="#fff">&gt;_</text>` },
  { name: "ColorSync", open: true, art: svg`<defs><linearGradient id="d20" x1="0" y1="0" x2="1" y2="0"><stop offset="0" stop-color="#f79a35"/><stop offset=".5" stop-color="#ea5a9a"/><stop offset="1" stop-color="#45bde0"/></linearGradient><linearGradient id="d20b" x1="0" y1="0" x2="1" y2="0"><stop offset="0" stop-color="#f5dd2e"/><stop offset=".55" stop-color="#8fd13e"/><stop offset="1" stop-color="#38c1b4"/></linearGradient><linearGradient id="d20f" x1="0" y1="0" x2="0" y2="1"><stop offset=".25" stop-color="#000"/><stop offset=".75" stop-color="#fff"/></linearGradient><mask id="d20m"><rect width="42" height="42" fill="url(#d20f)"/></mask></defs><rect width="42" height="42" rx="10" fill="url(#d20)"/><rect width="42" height="42" rx="10" fill="url(#d20b)" mask="url(#d20m)"/><path d="M7 7l12 12" stroke="#1c1c1c" stroke-width="6"/><path d="M24 24l11 12" stroke="#dfe4e6" stroke-width="3.500"/><path d="M32 11L8 34" stroke="#d3dbe0" stroke-width="5" stroke-linecap="round"/><path d="M25 13q-2-7 5-9l3 .5-2.500 4.500 3 3 4.500-2q.5 8-8 8z" fill="#d3dbe0"/><circle cx="21.500" cy="21" r="6" fill="#2a2a2a" stroke="#f3f3f3" stroke-width="1.600"/><path fill="#f0427b" d="M21.500 21v-4.500a4.500 4.500 0 0 1 4.500 4.500z"/><path fill="#53cf4b" d="M21.500 21H26a4.500 4.500 0 0 1-4.500 4.500z"/><path fill="#ef9e2f" d="M21.500 21v-4.500A4.500 4.500 0 0 0 17 21z"/>` },
  { name: "Safari", open: true, after: true, art: svg`<rect width="42" height="42" rx="10" fill="#f4f4f5"/><defs><linearGradient id="d21" x1="0" y1="0" x2="0" y2="1"><stop offset="0" stop-color="#37aef2"/><stop offset="1" stop-color="#1b6de6"/></linearGradient></defs><circle cx="21" cy="21" r="18" fill="url(#d21)"/><circle cx="21" cy="21" r="15.500" fill="none" stroke="#cfe6fb" stroke-width="2.500" stroke-dasharray=".7 1.300"/><path fill="#ea4035" d="M34 9L19 18.500l4 4z"/><path fill="#f5f5f5" d="M9 33l10-14.500 4 4z"/>` },
  { name: "Hilfe", art: svg`<path d="M9.500 12Q10 2 20.500 2t11 9.500q0 5-5.500 9-5 3.500-5 10.500" fill="none" stroke="#a195ae" stroke-width="2.800"/><rect x="19" y="36.500" width="4" height="4" fill="#a195ae"/>` },
  { name: "Papierkorb", art: svg`<defs><linearGradient id="d23" x1="0" y1="0" x2="1" y2="0"><stop offset="0" stop-color="#5f6467"/><stop offset=".4" stop-color="#a1a6a8"/><stop offset="1" stop-color="#5b5f62"/></linearGradient></defs><path fill="#d9d9d6" d="M4 4l4-5 6-2 6 1 6-2 6 3 5 3-2 5H6z"/><path d="M10 0l4 4M24-1l6 5M17 3l3-3" stroke="#5e6b60" stroke-width="2"/><path d="M18 1l4 3" stroke="#c0502f" stroke-width="2"/><path fill="url(#d23)" d="M2.500 3Q21 8 39.500 3L34.500 40q-1 4-13.500 4T7.500 40z"/><path d="M2.500 3Q21 9 39.500 3" fill="none" stroke="#b9bdbf"/>` },
];

@customElement("mac-dock")
export class MacDock extends LitElement {
  static styles = css`
    :host { display: flex; justify-content: center; padding: 4px 0; }
    .dock { display: flex; gap: 14px; height: 68px; padding: 9px 9px 0; box-sizing: border-box; border: 1px solid rgba(255, 255, 255, .2); border-radius: 18px; background: rgba(52, 42, 74, .4); }
    .app { all: unset; display: flex; flex-direction: column; align-items: center; gap: 9px; width: 42px; }
    svg { display: block; overflow: visible; }
    .dot { width: 4px; height: 4px; border-radius: 50%; background: #b49bd6; }
    .rule { width: 1px; height: 49px; margin: 0 5px 0 6px; background: rgba(190, 160, 210, .4); }
  `;

  render() {
    return html`<div class="dock">
      ${DOCK.map((d) => html`
        <button class="app" aria-label=${d.name}>
          <svg width="42" height="42" viewBox="0 0 42 42">${d.art}</svg>
          ${d.open ? html`<span class="dot"></span>` : ""}
        </button>
        ${d.after ? html`<span class="rule"></span>` : ""}`)}
    </div>`;
  }
}

@customElement("app-root")
export class AppRoot extends LitElement {
  static styles = css`
    :host { display: flex; flex-direction: column; height: 100vh; overflow: hidden; background: linear-gradient(100deg, #100a2c 0%, #150d38 30%, #211450 52%, #431d62 63%, #4f2168 76%, #1c1040 88%, #150c3c 100%); color: #fff; }
    * { box-sizing: border-box; }
    .window { display: flex; flex-direction: column; flex: 1; min-height: 0; border: 1px solid #5a585c; border-radius: 10px; overflow: hidden; background: #131313; box-shadow: 0 0 0 1px #000; }
    .page { display: flex; flex: 1; min-height: 0; }
    side-menu { flex: none; margin-left: -1px; }
    .main { display: flex; flex-direction: column; flex: 1; min-width: 0; }
    .header { display: flex; align-items: center; height: 63px; padding: 0 33px 0 36px; background: #3b3b3b; font-family: "Liberation Sans", Arial, sans-serif; box-shadow: 0 2px 4px rgba(0, 0, 0, .6); }
    .header button { all: unset; display: flex; }
    .icons { display: flex; gap: 24px; margin: 0 auto 2px 0; }
    .place { font-size: 24px; line-height: 32px; -webkit-text-stroke: .5px #fff; }
    .user { display: flex; align-items: center; gap: 8px; margin-left: 20px; font-size: 16px; -webkit-text-stroke: .3px #fff; }
    .user svg { stroke: none; }
    adapter-settings { flex: 1; margin: 8px 7px 7px 8px; }
  `;

  render() {
    return html`
      <div class="window">
        <safari-toolbar></safari-toolbar>
        <div class="page">
          <side-menu></side-menu>
          <main class="main">
            <header class="header">
              <div class="icons">
                <button aria-label="Ansicht">${icon("eye")}</button>
                <button aria-label="Systemeinstellungen">${icon("build")}</button>
                <button aria-label="Farbschema">${icon("theme")}</button>
                <button aria-label="Expertenmodus">${head}</button>
              </div>
              <span class="place">Haus</span>
              <div class="user">${icon("person", 45)}admin</div>
            </header>
            <adapter-settings></adapter-settings>
          </main>
        </div>
      </div>
      <mac-dock></mac-dock>
    `;
  }
}
